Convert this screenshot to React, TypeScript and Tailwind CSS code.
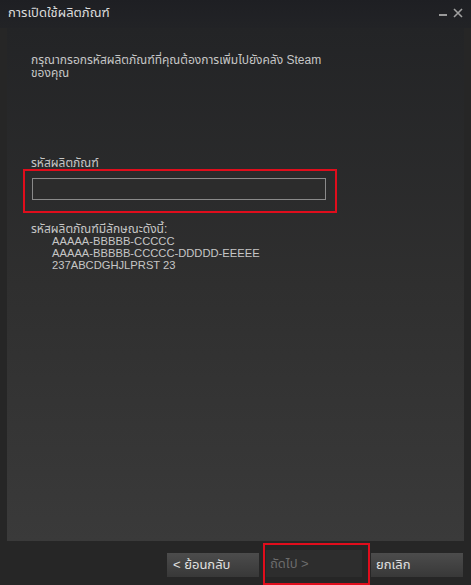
import React from "react";

const font = { fontFamily: '"Liberation Sans", "Noto Sans Thai", Tahoma, "Noto Sans", sans-serif' };

export default function App() {
  return (
    <div
      className="relative w-[471px] h-[585px] overflow-hidden bg-[#262626] flex flex-col text-[12px] leading-[12px] text-[#c6c6c6]"
      style={font}
    >
      {/* title bar */}
      <div className="h-[28px] shrink-0 flex items-center justify-between pl-[8px] pr-[8px] bg-gradient-to-b from-[#1e1f23] to-[#222326]">
        <span className="text-[13px] font-normal text-[#dcdcdc] -mt-[2px]">การเปิดใช้ผลิตภัณฑ์</span>
        <div className="flex items-center gap-[6px] text-[#9a9a9a] -mt-[4px]">
          <span className="block w-[8px] h-[1.5px] bg-[#9a9a9a] mt-[6px]" />
          <svg width="10" height="10" viewBox="0 0 10 10" className="mt-[2px]">
            <path d="M1 1 L9 9 M9 1 L1 9" stroke="#a0a0a0" strokeWidth="1.6" />
          </svg>
        </div>
      </div>

      {/* main panel */}
      <div className="mx-[7px] h-[513px] shrink-0 bg-gradient-to-b from-[#232426] via-[#2f2f2f] to-[#3a3a3a] pl-[24px] pr-[20px] pt-[26px] flex flex-col">
        <p className="leading-[13px] w-[320px]">
          กรุณากรอกรหัสผลิตภัณฑ์ที่คุณต้องการเพิ่มไปยังคลัง Steam
          <br />
          ของคุณ
        </p>

        <div className="mt-[77px] text-[#c6c6c6]">รหัสผลิตภัณฑ์</div>
        <div className="relative mt-[9px] ml-[1px] w-[294px]">
          <div className="h-[22px] border border-[#8a8a8a] bg-[#2c2c2c]" />
          <div className="absolute -left-[9px] -top-[9px] w-[314px] h-[44px] border-2 border-[#e00d1c] pointer-events-none" />
        </div>

        <div className="mt-[23px]">
          <div className="leading-[12px]">รหัสผลิตภัณฑ์มีลักษณะดังนี้:</div>
          <div className="pl-[21px] text-[11.2px] leading-[11.8px] mt-[1px]">
            <div>AAAAA-BBBBB-CCCCC</div>
            <div>AAAAA-BBBBB-CCCCC-DDDDD-EEEEE</div>
            <div>237ABCDGHJLPRST 23</div>
          </div>
        </div>
      </div>

      {/* footer */}
      <div className="flex-1 flex justify-end items-start pr-[8px] pt-[9px]">
        <button className="mt-[3px] w-[92px] h-[24px] bg-gradient-to-b from-[#4c4c4c] to-[#383838] text-left pl-[6px] text-[13px] text-[#e0e0e0]">
          &lt; ย้อนกลับ
        </button>
        <div className="relative ml-[7px]">
          <button className="w-[96px] h-[27px] bg-[#2d2d2d] text-left pl-[4px] text-[13px] text-[#6c6c6c]">
            ถัดไป &gt;
          </button>
          <div className="absolute -left-[3px] -top-[7px] w-[107px] h-[42px] border-2 border-[#e00d1c] pointer-events-none" />
        </div>
        <button className="mt-[3px] ml-[9px] w-[92px] h-[24px] bg-gradient-to-b from-[#4c4c4c] to-[#383838] text-left pl-[5px] text-[13px] text-[#e0e0e0]">
          ยกเลิก
        </button>
      </div>
    </div>
  );
}
